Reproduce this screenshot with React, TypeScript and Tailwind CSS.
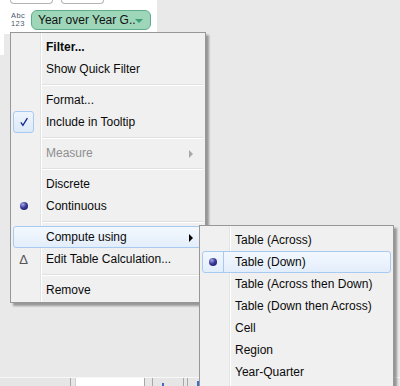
import React from "react";

function Sphere() {
  return (
    <span className="block w-[8px] h-[8px] rounded-full bg-[radial-gradient(circle_at_35%_30%,#a9a9e8_0%,#3a3a9a_45%,#14145a_100%)]" />
  );
}

function Row({
  label,
  bold,
  disabled,
  icon,
  iconBox,
  highlight,
  arrow,
}: {
  label: string;
  bold?: boolean;
  disabled?: boolean;
  icon?: React.ReactNode;
  iconBox?: boolean;
  highlight?: boolean;
  arrow?: boolean;
}) {
  return (
    <div
      className={
        "relative h-[22px] mx-[2px] flex items-center rounded-[3px] border " +
        (highlight
          ? "border-[#a8caf0] bg-[linear-gradient(#f3f8fe,#e3eefb)]"
          : "border-transparent")
      }
    >
      <div
        className={
          "w-[21px] h-[22px] -my-[1px] -ml-[1px] flex items-center justify-center rounded-[3px] border " +
          (iconBox
            ? "border-[#a8caf0] bg-[linear-gradient(#eef5fd,#dde9f8)]"
            : "border-transparent")
        }
      >
        {icon}
      </div>
      <span
        className={
          "ml-[12px] leading-none whitespace-nowrap " +
          (bold ? "font-bold " : "") +
          (disabled ? "text-[#8e8e8e]" : "text-[#0a0a0a]")
        }
      >
        {label}
      </span>
      {arrow && (
        <span
          className={
            "absolute right-[9px] top-[7px] w-0 h-0 border-y-[4px] border-y-transparent border-l-[4px] " +
            (disabled ? "border-l-[#a8a8a8]" : "border-l-black")
          }
        />
      )}
    </div>
  );
}

function Sep() {
  return (
    <div className="h-[9px] flex flex-col justify-center pl-[31px] pr-[2px]">
      <div className="h-px bg-[#e0e0e0]" />
      <div className="h-px bg-white" />
    </div>
  );
}

function SubRow({
  label,
  highlight,
}: {
  label: string;
  highlight?: boolean;
}) {
  return (
    <div
      className={
        "h-[22px] mx-[2px] flex items-center rounded-[3px] border " +
        (highlight
          ? "border-[#a8caf0] bg-[linear-gradient(#f3f8fe,#e3eefb)]"
          : "border-transparent")
      }
    >
      <div
        className={
          "w-[21px] h-[20px] flex items-center justify-center " +
          (highlight ? "border-r border-[#a8caf0]" : "")
        }
      >
        {highlight && <Sphere />}
      </div>
      <span className="ml-[11px] leading-none whitespace-nowrap text-[#0a0a0a]">
        {label}
      </span>
    </div>
  );
}

export default function App() {
  return (
    <div className="relative w-[400px] h-[386px] overflow-hidden bg-[#e9e9e9] font-['Liberation_Sans',Arial,sans-serif] text-[12px] text-black flex flex-col">
      {/* white card */}
      <div className="w-[157px] h-[55px] bg-white flex flex-col">
        <div className="flex pl-[10px] gap-[8px]">
          <div className="w-[43px] h-[4px] border border-t-0 border-[#b4b4b4] rounded-b-[4px]" />
          <div className="w-[43px] h-[4px] border border-t-0 border-[#b4b4b4] rounded-b-[4px]" />
        </div>
        <div className="flex items-center mt-[6px] pl-[11px] h-[20px]">
          <div className="flex flex-col text-[7.5px] leading-[8px] text-[#4a5a70] w-[16px] tracking-[0.4px]">
            <span>Abc</span>
            <span>123</span>
          </div>
          <div className="ml-[4px] w-[120px] h-[20px] rounded-[6px] border border-[#5fad88] bg-[#9ed6b9] flex items-center pl-[6px] relative">
            <span className="leading-none whitespace-nowrap text-[#111]">
              Year over Year G..
            </span>
            <span className="absolute right-[7px] top-[8px] w-0 h-0 border-x-[4px] border-x-transparent border-t-[4px] border-t-[#3f9c74]" />
          </div>
        </div>
        <div className="h-[4px]" />
        <div className="flex-1 pl-[4px]">
          <div className="h-full bg-[#e9e9e9]" />
        </div>
      </div>

      <div className="flex-1" />

      {/* bottom tab strip */}
      <div className="h-[9px] border-t border-[#f6f6f6] flex bg-[#e6e6e6]">
        <div className="w-[71px] border-r border-[#a8a8a8]" />
        <div className="w-[4px]" />
        <div className="w-[69px] bg-white border-l border-[#d0d0d0]" />
        <div className="w-[8px] border-l border-[#a8a8a8]" />
        <div className="w-[31px] border-l border-[#a8a8a8] relative">
          <span className="absolute left-[9px] bottom-0 w-[2px] h-[3px] bg-[#3b6fc6]" />
        </div>
        <div className="w-[4px] border-l border-[#a8a8a8]" />
        <div className="w-[12px] border-l border-[#a8a8a8] relative">
          <span className="absolute left-[9px] bottom-0 w-[3px] h-[5px] bg-[#3b6fc6]" />
        </div>
      </div>

      {/* main context menu */}
      <div className="absolute left-[10px] top-[32px] w-[196px] bg-[#f0f0f0] border border-[#979797] shadow-[3px_3px_2px_rgba(0,0,0,0.35)] pt-[3px] pb-[1px]">
        <div className="absolute left-[29px] top-0 bottom-0 w-px bg-[#e2e3e3]" />
        <div className="absolute left-[30px] top-0 bottom-0 w-px bg-white" />
        <Row label="Filter..." bold />
        <Row label="Show Quick Filter" />
        <Sep />
        <Row label="Format..." />
        <Row
          label="Include in Tooltip"
          iconBox
          icon={
            <svg width="10" height="10" viewBox="0 0 10 10">
              <path
                d="M1.8 5.4 L3.9 8.3 L8.4 1.2"
                fill="none"
                stroke="#0d2a8a"
                strokeWidth="1.3"
              />
            </svg>
          }
        />
        <Sep />
        <Row label="Measure" disabled arrow />
        <Sep />
        <Row label="Discrete" />
        <Row label="Continuous" icon={<Sphere />} />
        <Sep />
        <Row label="Compute using" highlight arrow />
        <Row
          label="Edit Table Calculation..."
          icon={
            <span className="text-[13px] leading-none text-[#555]">Δ</span>
          }
        />
        <Sep />
        <Row label="Remove" />
      </div>

      {/* submenu */}
      <div className="absolute left-[199px] top-[225px] w-[195px] h-[170px] bg-[#f0f0f0] border border-[#979797] shadow-[3px_3px_2px_rgba(0,0,0,0.35)] pt-[3px]">
        <div className="absolute left-[29px] top-0 bottom-0 w-px bg-[#e2e3e3]" />
        <div className="absolute left-[30px] top-0 bottom-0 w-px bg-white" />
        <div className="relative">
          <SubRow label="Table (Across)" />
          <SubRow label="Table (Down)" highlight />
          <SubRow label="Table (Across then Down)" />
          <SubRow label="Table (Down then Across)" />
          <SubRow label="Cell" />
          <SubRow label="Region" />
          <SubRow label="Year-Quarter" />
        </div>
      </div>
    </div>
  );
}
